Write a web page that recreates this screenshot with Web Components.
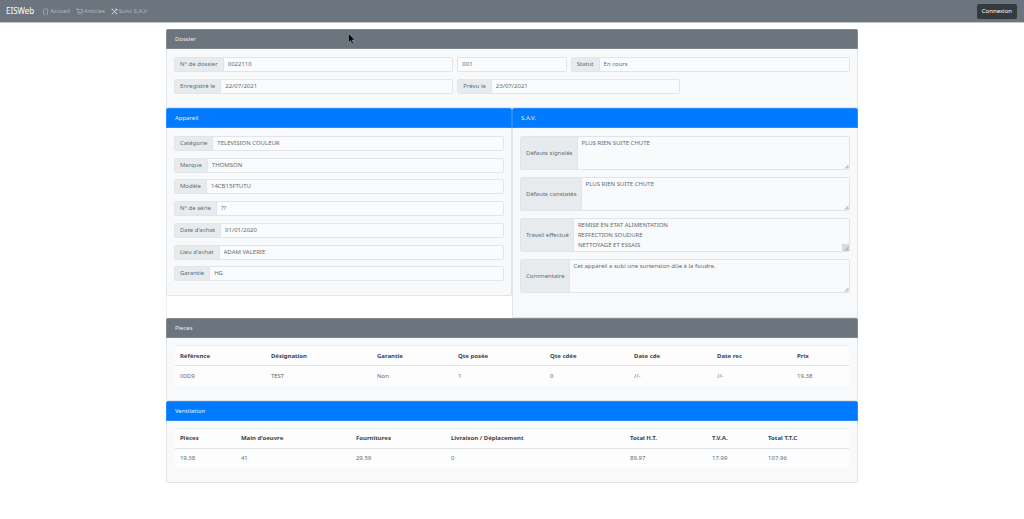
<!DOCTYPE html>
<html lang="fr">
<head>
<meta charset="utf-8">
<meta name="viewport" content="width=device-width, initial-scale=1">
<title>EISWeb</title>
<style>
  body {
    margin: 0;
    background: #fff;
    color: #636b73;
    font: 6px/10px "Noto Sans", "Open Sans", sans-serif;
    --gray: #6c757d;
    --blue: #007bff;
    --line: #e2e5e8;
    --panel: #f8f9fb;
    --addon: #e7ebee;
  }
  main { width: 67.6%; margin: 6px auto 0; }
  .pair { display: grid; grid-template-columns: 1fr 1fr; align-items: start; box-shadow: inset 1px 0 #eef0f2; }
  .pair > .fill { align-self: stretch; }
  .identity { display: grid; grid-template-columns: repeat(12, 1fr); gap: 7px 4px; margin: 1px 0 6px; }
  .w5 { grid-column: span 5; }
  .w4 { grid-column: span 4; }
  .w2 { grid-column: span 2; }
  .rows { display: grid; grid-auto-rows: 1fr; min-height: 152px; margin-top: 1px; }
  .areas { display: grid; gap: 7px; margin: 1px 0 17px; }
</style>
</head>
<body>
<eis-navbar></eis-navbar>
<main>
  <eis-card heading="Dossier">
    <div class="identity">
      <eis-field class="w5" label="N° de dossier" value="0022110"></eis-field>
      <eis-field class="w2" name="Indice" value="001"></eis-field>
      <eis-field class="w5" label="Statut" value="En cours"></eis-field>
      <eis-field class="w5" label="Enregistré le" value="22/07/2021"></eis-field>
      <eis-field class="w4" label="Prévu le" value="23/07/2021"></eis-field>
    </div>
  </eis-card>
  <div class="pair">
    <eis-card heading="Appareil" tone="blue">
      <div class="rows">
        <eis-field label="Catégorie" value="TELEVISION COULEUR"></eis-field>
        <eis-field label="Marque" value="THOMSON"></eis-field>
        <eis-field label="Modèle" value="14CB15FTUTU"></eis-field>
        <eis-field label="N° de série" value="??"></eis-field>
        <eis-field label="Date d'achat" value="01/01/2020"></eis-field>
        <eis-field label="Lieu d'achat" value="ADAM VALERIE"></eis-field>
        <eis-field label="Garantie" value="HG"></eis-field>
      </div>
    </eis-card>
    <eis-card class="fill" heading="S.A.V." tone="blue">
      <div class="areas">
        <eis-area label="Défauts signalés" value="PLUS RIEN SUITE CHUTE"></eis-area>
        <eis-area label="Défauts constatés" value="PLUS RIEN SUITE CHUTE"></eis-area>
        <eis-area label="Travail effectué" corner value="REMISE EN ETAT ALIMENTATION&#10;REFFECTION SOUDURE&#10;NETTOYAGE ET ESSAIS"></eis-area>
        <eis-area label="Commentaire" value="Cet appareil a subi une surtension dûe à la foudre."></eis-area>
      </div>
    </eis-card>
  </div>
  <eis-card heading="Pieces">
    <eis-table cols="91,106,81,92,84,83,80,57"
      head="Référence|Désignation|Garantie|Qte posée|Qte cdée|Date cde|Date rec|Prix"
      row="00D9|TEST|Non|1|0|//-|//-|19.38"></eis-table>
  </eis-card>
  <eis-card heading="Ventilation" tone="blue">
    <eis-table cols="61,115,95,179,82,56,86"
      head="Pièces|Main d'oeuvre|Fournitures|Livraison / Déplacement|Total H.T.|T.V.A.|Total T.T.C"
      row="19.38|41|29.59|0|89.97|17.99|107.96"></eis-table>
  </eis-card>
</main>
<eis-pointer></eis-pointer>

<template id="navbar">
  <style>
    :host { display: block; }
    nav { display: flex; align-items: center; height: 22px; padding: 0 7px 0 6px; background: var(--gray); border-bottom: 1px solid #c3c7cb; }
    a { color: #b3b8bd; text-decoration: none; display: flex; align-items: center; gap: 1px; }
    .brand { color: #fff; font-size: 8px; line-height: 12px; margin-right: 8px; }
    ul { display: flex; gap: 6px; list-style: none; margin: 0; padding: 0; flex: 1; }
    svg { width: 7px; height: 7px; fill: none; stroke: currentColor; }
    button { font: inherit; color: #fff; background: #343a40; border: 0; border-radius: 2px; height: 15px; padding: 0 5px; }
  </style>
  <nav>
    <a class="brand" href="#">EISWeb</a>
    <ul>
      <li><a href="#"><svg viewBox="0 0 14 14"><path d="M1 6.500 6 1.500h3L13 6M3 5v7.500h3M8 12.500h3V5M10.500 3V1" stroke-width="1.300"/></svg>Accueil</a></li>
      <li><a href="#"><svg viewBox="0 0 14 14"><path d="M0 1.500h2.500L4.500 9H12L13.500 3H3" stroke-width="1.400"/><circle cx="5.500" cy="12" r="1"/><circle cx="11" cy="12" r="1"/></svg>Articles</a></li>
      <li><a href="#"><svg viewBox="0 0 14 14" style="color:#d8dbdd"><path d="M2 2 12 12.500M12 2 2 12.500" stroke-width="2"/><path d="M1 4 4 1M10 1v3h3.500M10 12.500 12.500 10" stroke-width="1.600"/></svg>Suivi S.A.V</a></li>
    </ul>
    <button type="button">Connexion</button>
  </nav>
</template>

<template id="card">
  <style>
    :host { display: block; box-sizing: border-box; background: var(--panel); border: 1px solid var(--line); border-top: 0; border-radius: 2px; }
    h2 { margin: 0 -1px; height: 20px; box-sizing: border-box; padding: 4px 8px; font: inherit; color: #e9ebed; background: var(--gray); border: 1px solid rgba(255,255,255,.15); border-radius: 2px 2px 0 0; }
    :host([tone=blue]) h2 { background: var(--blue); color: #e4f1ff; }
    .body { padding: 7px; }
  </style>
  <h2></h2>
  <div class="body"><slot></slot></div>
</template>

<template id="field">
  <style>
    :host { display: block; min-width: 0; }
    .group { display: flex; height: 15px; box-sizing: border-box; border: 1px solid var(--line); border-radius: 2px; overflow: hidden; }
    label { flex: none; padding: 0 5px; line-height: 13px; background: var(--addon); border-right: 1px solid var(--line); }
    input { flex: 1; min-width: 0; font: inherit; line-height: 13px; color: inherit; background: #fafbfc; border: 0; margin: 0; padding: 0 4px; outline: 0; }
  </style>
  <div class="group"><label for="f"></label><input id="f" type="text" readonly></div>
</template>

<template id="area">
  <style>
    :host { display: block; position: relative; }
    .group { display: flex; height: 34px; box-sizing: border-box; border: 1px solid var(--line); border-radius: 2px; overflow: hidden; }
    label { flex: none; display: flex; align-items: center; padding: 0 4px 0 5px; background: var(--addon); border-right: 1px solid var(--line); }
    textarea { flex: 1; min-width: 0; font: inherit; color: inherit; background: #f9fafb; border: 0; margin: 0; padding: 1px 4px; outline: 0; resize: none; overflow: hidden; }
    svg { position: absolute; right: 1px; bottom: 1px; width: 7px; height: 7px; }
    :host([corner]) svg { background: #d9dadc; }
  </style>
  <div class="group"><label for="f"></label><textarea id="f" readonly></textarea></div>
  <svg viewBox="0 0 7 7"><path d="M3 6.500 6.500 3M5 6.500 6.500 5" stroke="#999" fill="none"/></svg>
</template>

<template id="table">
  <style>
    :host { display: block; margin: 0 1px 7px; }
    table { width: 100%; table-layout: fixed; border-collapse: collapse; background: #fdfdfe; }
    th, td { height: 20px; box-sizing: border-box; padding: 0 5px; text-align: left; border-top: 1px solid #eceef0; white-space: nowrap; }
    th { font-weight: 700; color: #3b4249; }
    td { border-top-color: #dfe3e7; }
  </style>
  <table><colgroup></colgroup><thead><tr></tr></thead><tbody><tr></tr></tbody></table>
</template>

<template id="pointer">
  <style>
    :host { position: absolute; left: 34%; top: 33px; width: 8px; height: 12px; pointer-events: none; }
    svg { display: block; width: 8px; height: 12px; }
  </style>
  <svg viewBox="0 0 8 12"><path d="M.5.500v9l2-2 1.500 3.500 1.500-.7L4 7h3z" fill="#000" stroke="#aaa" stroke-width=".5"/></svg>
</template>

<script>
  class Base extends HTMLElement {
    constructor(id) {
      super();
      this.attachShadow({ mode: 'open' }).append(document.getElementById(id).content.cloneNode(true));
    }
    $(selector) { return this.shadowRoot.querySelector(selector); }
  }
  class Navbar extends Base { constructor() { super('navbar'); } }
  class Pointer extends Base { constructor() { super('pointer'); } }
  class Card extends Base {
    constructor() { super('card'); }
    connectedCallback() { this.$('h2').textContent = this.getAttribute('heading'); }
  }
  class Field extends Base {
    constructor(id = 'field') { super(id); }
    connectedCallback() {
      const label = this.$('label'), control = this.$('#f');
      control.value = this.getAttribute('value');
      if (this.hasAttribute('label')) label.textContent = this.getAttribute('label');
      else { label.remove(); control.setAttribute('aria-label', this.getAttribute('name')); }
    }
  }
  class Area extends Field { constructor() { super('area'); } }
  class DataTable extends Base {
    constructor() { super('table'); }
    connectedCallback() {
      const widths = this.getAttribute('cols').split(',').map(Number);
      const total = widths.reduce((a, b) => a + b);
      for (const w of widths) {
        const col = document.createElement('col');
        col.style.width = (w / total * 100) + '%';
        this.$('colgroup').append(col);
      }
      this.fill('thead tr', 'th', 'head');
      this.fill('tbody tr', 'td', 'row');
    }
    fill(target, tag, attribute) {
      for (const text of this.getAttribute(attribute).split('|')) {
        const cell = document.createElement(tag);
        cell.textContent = text;
        this.$(target).append(cell);
      }
    }
  }
  customElements.define('eis-navbar', Navbar);
  customElements.define('eis-card', Card);
  customElements.define('eis-field', Field);
  customElements.define('eis-area', Area);
  customElements.define('eis-table', DataTable);
  customElements.define('eis-pointer', Pointer);
</script>
</body>
</html></script>
